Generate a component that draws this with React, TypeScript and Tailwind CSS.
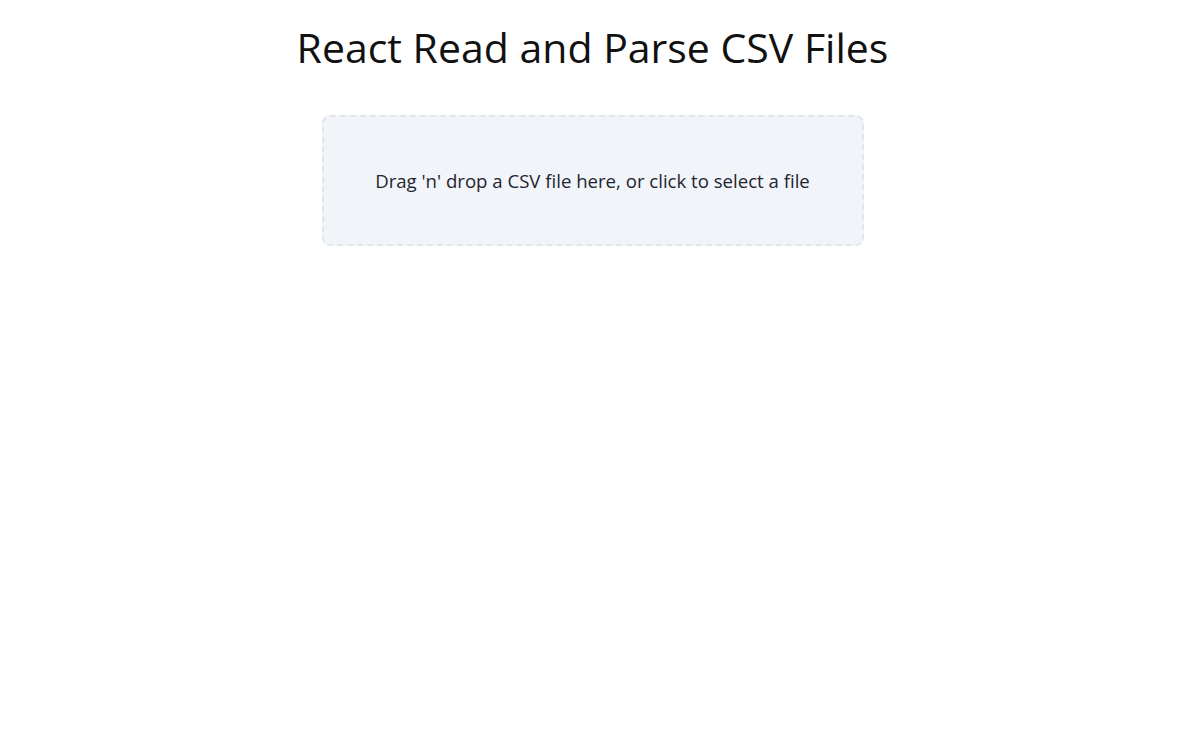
import React from 'react';

const App: React.FC = () => {
  return (
    <div className="min-h-screen bg-white text-[#111] font-['Segoe_UI','Open_Sans',sans-serif] pr-[15px]">
      <div className="flex flex-col items-center pt-[20px]">
        <h1 className="text-[41px] leading-[54px] font-normal">React Read and Parse CSV Files</h1>
        <div className="mt-[41px] w-[542px] h-[131px] flex items-center justify-center rounded-lg border-2 border-dashed border-[#e2e6ea] bg-[#f1f4f8] cursor-pointer">
          <p className="text-[18.6px] text-[#1f2430]">Drag 'n' drop a CSV file here, or click to select a file</p>
        </div>
      </div>
    </div>
  );
};

export default App;
